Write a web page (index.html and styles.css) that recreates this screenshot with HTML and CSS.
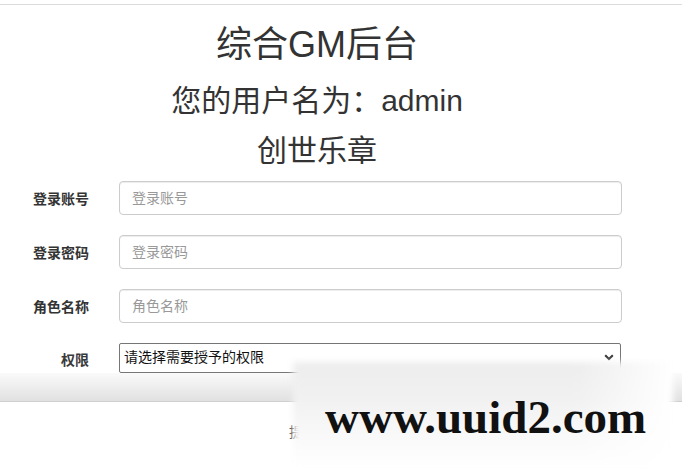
FILE: index.html
```html
<!DOCTYPE html>
<html lang="zh-CN">
<head>
<meta charset="utf-8">
<title>综合GM后台</title>
<link rel="stylesheet" href="styles.css">
</head>
<body>
<div class="topline"></div>
<div class="page">
  <div class="heads">
    <h1 class="title">综合GM后台</h1>
    <h2 class="user">您的用户名为：admin</h2>
    <h3 class="server">创世乐章</h3>
  </div>
  <form class="form">
    <div class="row">
      <label class="label">登录账号</label>
      <input class="control" type="text" placeholder="登录账号">
    </div>
    <div class="row">
      <label class="label">登录密码</label>
      <input class="control" type="text" placeholder="登录密码">
    </div>
    <div class="row">
      <label class="label">角色名称</label>
      <input class="control" type="text" placeholder="角色名称">
    </div>
    <div class="row row-select">
      <label class="label label-light">权限</label>
      <div class="select-wrap">
        <select class="select"><option>请选择需要授予的权限</option></select>
        <svg class="chev" width="10" height="7" viewBox="0 0 10 7"><path d="M1.2 1.2 L5 5 L8.8 1.2" fill="none" stroke="#333" stroke-width="2"/></svg>
      </div>
    </div>
  </form>
  <div class="bar"></div>
  <div class="submit-row"><span class="submit-text">提交授权</span></div>
</div>
<div class="watermark">
  <div class="wm-bg"></div>
  <span class="wm-text">www.uuid2.com</span>
</div>
</body>
</html>
```
FILE: styles.css
```css
html, body {
  margin: 0;
  padding: 0;
  background: #fff;
}
body {
  font-family: "Liberation Sans", "Noto Sans CJK SC", sans-serif;
  color: #333;
  width: 682px;
  height: 474px;
  overflow: hidden;
  position: relative;
}
.topline {
  height: 4px;
  border-bottom: 1px solid #dcdcdc;
}
.heads {
  width: 634px;
  text-align: center;
}
.title {
  margin: 20px 0 0;
  font-size: 36px;
  line-height: 40px;
  font-weight: normal;
  color: #333;
}
.user {
  margin: 19px 0 0;
  font-size: 30px;
  line-height: 33px;
  font-weight: normal;
}
.server {
  margin: 17px 0 0;
  font-size: 30px;
  line-height: 34px;
  font-weight: normal;
}
.form {
  margin: 13px 0 0;
  display: flex;
  flex-direction: column;
  gap: 20px;
}
.row {
  display: grid;
  grid-template-columns: 89px 503px;
  column-gap: 30px;
  align-items: center;
}
.label {
  text-align: right;
  font-size: 14px;
  font-weight: bold;
  color: #333;
}
.label-light {
  padding-top: 1px;
  font-weight: bold;
  color: #3a3a3a;
}
.control {
  box-sizing: border-box;
  height: 34px;
  width: 503px;
  margin: 0;
  padding: 6px 12px;
  border: 1px solid #ccc;
  border-radius: 4px;
  box-shadow: inset 0 1px 1px rgba(0,0,0,.075);
  font-family: "Liberation Sans", "Noto Sans CJK SC", sans-serif;
  font-size: 14px;
  color: #555;
  background: #fff;
}
.control::placeholder {
  color: #999;
}
.select-wrap {
  position: relative;
  width: 502px;
  height: 30px;
}
.select {
  -webkit-appearance: none;
  appearance: none;
  box-sizing: border-box;
  width: 502px;
  height: 30px;
  margin: 0;
  padding: 0 20px 2px 4px;
  border: 1px solid #767676;
  border-radius: 2px;
  background: #fff;
  font-family: "Liberation Sans", "Noto Sans CJK SC", sans-serif;
  font-size: 14px;
  color: #111;
}
.chev {
  position: absolute;
  right: 7px;
  top: 11px;
}
.bar {
  height: 28px;
  border-bottom: 1px solid #cfcfcf;
  background: linear-gradient(to bottom, #fafafa 0%, #e1e1e1 100%);
}
.submit-row {
  width: 634px;
  text-align: center;
  padding-top: 19px;
  font-size: 14px;
}
.submit-text {
  color: #333;
}
.watermark {
  position: absolute;
  left: 293px;
  top: 362px;
  width: 380px;
  height: 106px;
}
.wm-bg {
  position: absolute;
  left: 0;
  top: 0;
  right: 0;
  bottom: 0;
  background: linear-gradient(to right, rgba(255,255,255,0) 0%, rgba(255,255,255,0) 75%, #fff 100%),
              linear-gradient(to bottom, #ededed 0%, #f1f1f1 35%, #f8f8f8 65%, #fff 100%);
  filter: blur(3px);
}
.wm-text {
  position: absolute;
  left: 32px;
  top: 30px;
  font-family: "Liberation Serif", "DejaVu Serif", serif;
  font-weight: bold;
  font-size: 47px;
  line-height: 50px;
  color: #111;
  white-space: nowrap;
}
```
